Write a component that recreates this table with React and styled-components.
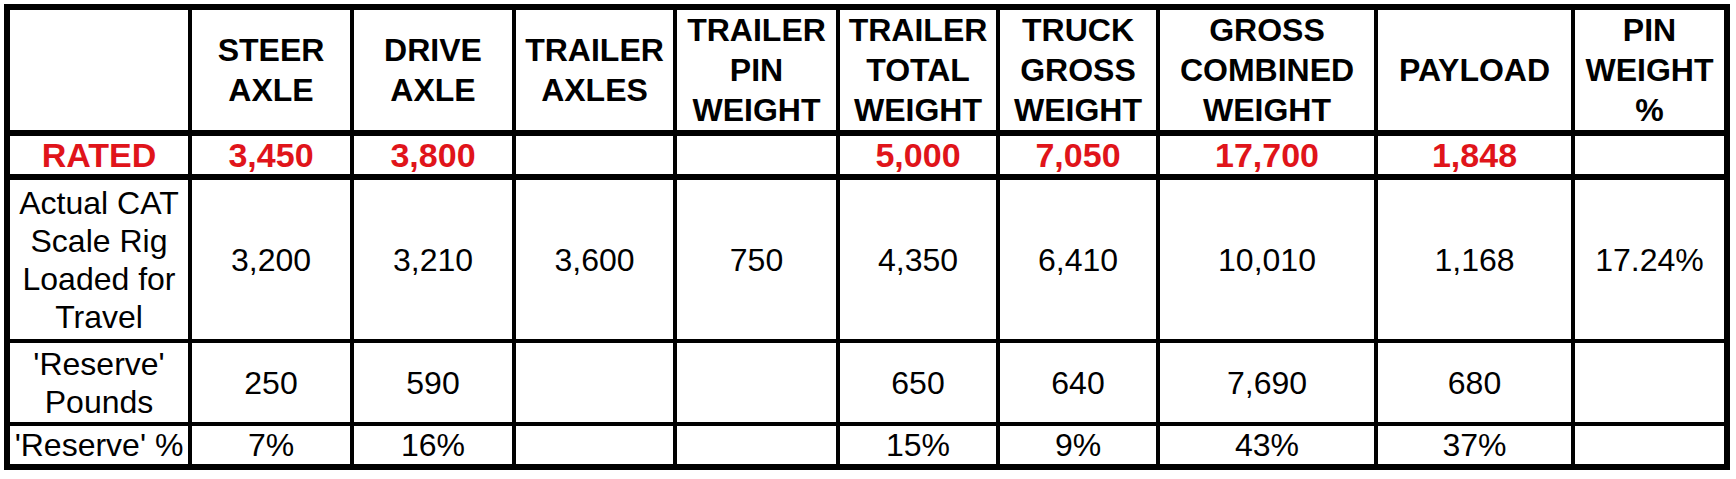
import React from "react";
import styled, { createGlobalStyle } from "styled-components";

const GlobalStyle = createGlobalStyle`
    html, body {
        margin: 0;
        padding: 0;
        background: #ffffff;
    }
    body {
        font-family: "Liberation Sans", Arial, sans-serif;
        color: #000;
    }
`;

const Page = styled.div`
    padding: 4px;
    width: 1736px;
    height: 479px;
    box-sizing: border-box;
    background: #ffffff;
`;

const Table = styled.table`
    border-collapse: separate;
    border-spacing: 0;
    table-layout: fixed;
    width: 1726px;
    border: 6px solid #000;
    box-sizing: border-box;
`;

const Col = styled.col`
    width: ${(props) => props.$w}px;
`;

const Cell = styled.td`
    box-sizing: border-box;
    height: ${(props) => props.$h}px;
    padding: 0;
    text-align: center;
    vertical-align: middle;
    border-right: ${(props) => (props.$last ? "none" : "4px solid #000")};
    border-bottom: ${(props) => (props.$bottom ? `${props.$bottom}px solid #000` : "none")};
    overflow: hidden;
    white-space: nowrap;
`;

const HeadText = styled.div`
    font-weight: 700;
    font-size: 32px;
    line-height: 40px;
`;

const RatedText = styled.div`
    font-weight: 700;
    font-size: 34px;
    line-height: 38px;
    color: #e0141a;
`;

const BodyText = styled.div`
    font-weight: 400;
    font-size: 32px;
    line-height: 38px;
`;

const colWidths = [182, 162, 162, 161, 163, 160, 160, 218, 197, 149];

const headers = [
    [],
    ["STEER", "AXLE"],
    ["DRIVE", "AXLE"],
    ["TRAILER", "AXLES"],
    ["TRAILER", "PIN", "WEIGHT"],
    ["TRAILER", "TOTAL", "WEIGHT"],
    ["TRUCK", "GROSS", "WEIGHT"],
    ["GROSS", "COMBINED", "WEIGHT"],
    ["PAYLOAD"],
    ["PIN", "WEIGHT", "%"],
];

const rated = ["RATED", "3,450", "3,800", "", "", "5,000", "7,050", "17,700", "1,848", ""];

const bodyRows = [
    {
        height: 163,
        bottom: 4,
        cells: [
            ["Actual CAT", "Scale Rig", "Loaded for", "Travel"],
            "3,200", "3,210", "3,600", "750", "4,350", "6,410", "10,010", "1,168", "17.24%",
        ],
    },
    {
        height: 83,
        bottom: 4,
        cells: [["'Reserve'", "Pounds"], "250", "590", "", "", "650", "640", "7,690", "680", ""],
    },
    {
        height: 38,
        bottom: 0,
        cells: ["'Reserve' %", "7%", "16%", "", "", "15%", "9%", "43%", "37%", ""],
    },
];

const Lines = ({ as: Text, value }) => {
    const lines = Array.isArray(value) ? value : [value];
    return (
        <Text>
            {lines.map((line, i) => (
                <div key={i}>{line || "\u00a0"}</div>
            ))}
        </Text>
    );
};

function WeightTable() {
    const last = colWidths.length - 1;
    return (
        <Table>
            <colgroup>
                {colWidths.map((w, i) => (
                    <Col key={i} $w={w} />
                ))}
            </colgroup>
            <tbody>
                <tr>
                    {headers.map((lines, i) => (
                        <Cell key={i} $h={123} $bottom={6} $last={i === last}>
                            <HeadText>
                                {lines.map((line) => (
                                    <div key={line}>{line}</div>
                                ))}
                            </HeadText>
                        </Cell>
                    ))}
                </tr>
                <tr>
                    {rated.map((value, i) => (
                        <Cell key={i} $h={44} $bottom={6} $last={i === last}>
                            <RatedText>{value || "\u00a0"}</RatedText>
                        </Cell>
                    ))}
                </tr>
                {bodyRows.map((row, r) => (
                    <tr key={r}>
                        {row.cells.map((value, i) => (
                            <Cell key={i} $h={row.height} $bottom={row.bottom} $last={i === last}>
                                <Lines as={BodyText} value={value} />
                            </Cell>
                        ))}
                    </tr>
                ))}
            </tbody>
        </Table>
    );
}

export default function App() {
    return (
        <>
            <GlobalStyle />
            <Page>
                <WeightTable />
            </Page>
        </>
    );
}
